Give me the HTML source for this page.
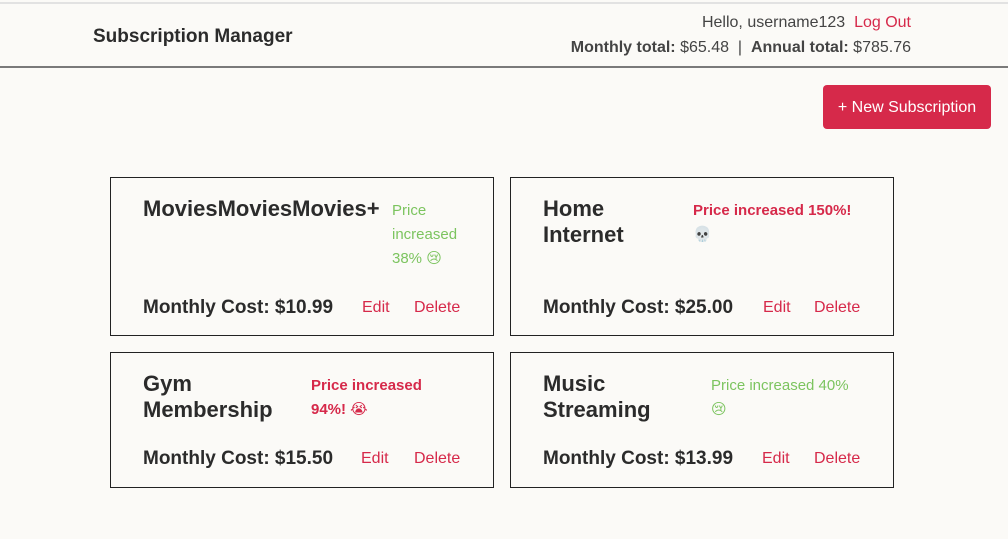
<!DOCTYPE html>
<html><head><meta charset="utf-8"><style>
*{margin:0;padding:0;box-sizing:border-box}
body{width:1008px;height:539px;background:#fbfaf7;font-family:"Liberation Sans","DejaVu Sans",sans-serif;color:#2b2b2b;position:relative;overflow:hidden}
.a{position:absolute;white-space:nowrap}
.top{position:absolute;left:0;top:2px;width:1008px;height:2px;background:#e2e2e2}
.hdr{position:absolute;left:0;top:66px;width:1008px;height:2px;background:#7a7a7a}
.red{color:#d6294a}
.grn{color:#7cc45f}
.card{position:absolute;border:1px solid #222;width:384px}
.t{font-size:22px;font-weight:bold;line-height:26px}
.p{font-size:15px;line-height:24px}
.c{font-size:19px;font-weight:bold}
.l{font-size:16px}
.btn{position:absolute;left:823px;top:85px;width:168px;height:44px;background:#d6294a;border-radius:4px;color:#fff;font-size:16px;line-height:46px;text-align:center}
</style></head><body>
<div class="top"></div>
<div class="a" style="left:93px;top:26px;font-size:19px;font-weight:bold">Subscription Manager</div>
<div class="a" style="right:97px;top:14px;font-size:16px;color:#444">Hello, username123&nbsp; <span class="red">Log Out</span></div>
<div class="a" style="right:97px;top:39px;font-size:16px;color:#444"><b>Monthly total:</b> $65.48 &nbsp;|&nbsp; <b>Annual total:</b> $785.76</div>
<div class="hdr"></div>
<div class="btn">+ New Subscription</div>

<div class="card" style="left:110px;top:177px;height:159px"></div>
<div class="a t" style="left:143px;top:196px">MoviesMoviesMovies+</div>
<div class="a p grn" style="left:392px;top:199px">Price<br>increased<br>38% 😢</div>
<div class="a c" style="left:143px;top:297px">Monthly Cost: $10.99</div>
<div class="a l red" style="left:362px;top:299px">Edit</div>
<div class="a l red" style="left:414px;top:299px">Delete</div>

<div class="card" style="left:510px;top:177px;height:159px"></div>
<div class="a t" style="left:543px;top:196px">Home<br>Internet</div>
<div class="a p red" style="left:693px;top:199px;font-weight:bold">Price increased 150%!<br>💀</div>
<div class="a c" style="left:543px;top:297px">Monthly Cost: $25.00</div>
<div class="a l red" style="left:763px;top:299px">Edit</div>
<div class="a l red" style="left:814px;top:299px">Delete</div>

<div class="card" style="left:110px;top:352px;height:136px"></div>
<div class="a t" style="left:143px;top:371px">Gym<br>Membership</div>
<div class="a p red" style="left:311px;top:374px;font-weight:bold">Price increased<br>94%! 😭</div>
<div class="a c" style="left:143px;top:448px">Monthly Cost: $15.50</div>
<div class="a l red" style="left:361px;top:450px">Edit</div>
<div class="a l red" style="left:414px;top:450px">Delete</div>

<div class="card" style="left:510px;top:352px;height:136px"></div>
<div class="a t" style="left:543px;top:371px">Music<br>Streaming</div>
<div class="a p grn" style="left:711px;top:374px">Price increased 40%<br>😢</div>
<div class="a c" style="left:543px;top:448px">Monthly Cost: $13.99</div>
<div class="a l red" style="left:762px;top:450px">Edit</div>
<div class="a l red" style="left:814px;top:450px">Delete</div>
</body></html>
